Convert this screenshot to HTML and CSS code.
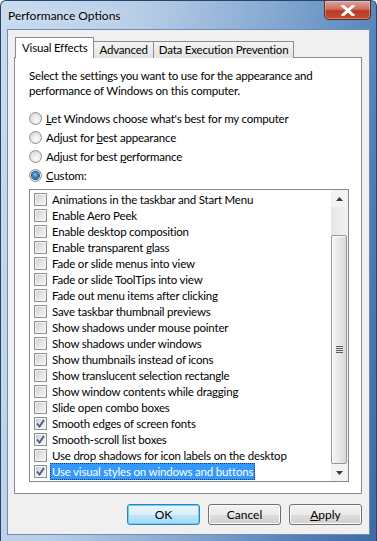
FILE: index.html
```html
<!DOCTYPE html>
<html lang="en">

<head>
    <meta charset="UTF-8">
    <meta name="viewport" content="width=device-width, initial-scale=1.0">
    <title>Performance Options</title>
    <link rel="stylesheet" href="styles.css">
</head>

<body>
    <div class="window">
        <div class="titlebar">
            <span class="title">Performance Options</span>
            <div class="close-button">
                <svg width="14" height="11" viewBox="0 0 14 11">
                    <path d="M2 1 L12 10 M12 1 L2 10" stroke="#fff" stroke-width="3" stroke-linecap="square" />
                </svg>
            </div>
        </div>

        <div class="client">
            <div class="tabs">
                <div class="tab active">Visual Effects</div>
                <div class="tab">Advanced</div>
                <div class="tab">Data Execution Prevention</div>
            </div>

            <div class="panel">
                <p class="intro">Select the settings you want to use for the appearance and<br>performance of Windows on this computer.</p>

                <div class="radios">
                    <div class="radio-row"><span class="radio"></span><span><u>L</u>et Windows choose what's best for my computer</span></div>
                    <div class="radio-row"><span class="radio"></span><span>Adjust for <u>b</u>est appearance</span></div>
                    <div class="radio-row"><span class="radio"></span><span>Adjust for best <u>p</u>erformance</span></div>
                    <div class="radio-row"><span class="radio checked"></span><span><u>C</u>ustom:</span></div>
                </div>

                <div class="listbox">
                    <ul class="items" id="items"></ul>
                    <div class="scrollbar">
                        <div class="arrow">
                            <svg width="7" height="4" viewBox="0 0 7 4"><path d="M0 4 L3.5 0 L7 4 Z" fill="#3c3c3c" /></svg>
                        </div>
                        <div class="track">
                            <div class="thumb">
                                <span class="grip"></span>
                            </div>
                        </div>
                        <div class="arrow">
                            <svg width="7" height="4" viewBox="0 0 7 4"><path d="M0 0 L7 0 L3.5 4 Z" fill="#3c3c3c" /></svg>
                        </div>
                    </div>
                </div>
            </div>

            <div class="buttons">
                <button class="btn default">OK</button>
                <button class="btn">Cancel</button>
                <button class="btn"><u>A</u>pply</button>
            </div>
        </div>
    </div>

    <script>
        // Visual effect settings: [label, checked]
        const effects = [
            ['Animations in the taskbar and Start Menu', false],
            ['Enable Aero Peek', false],
            ['Enable desktop composition', false],
            ['Enable transparent glass', false],
            ['Fade or slide menus into view', false],
            ['Fade or slide ToolTips into view', false],
            ['Fade out menu items after clicking', false],
            ['Save taskbar thumbnail previews', false],
            ['Show shadows under mouse pointer', false],
            ['Show shadows under windows', false],
            ['Show thumbnails instead of icons', false],
            ['Show translucent selection rectangle', false],
            ['Show window contents while dragging', false],
            ['Slide open combo boxes', false],
            ['Smooth edges of screen fonts', true],
            ['Smooth-scroll list boxes', true],
            ['Use drop shadows for icon labels on the desktop', false],
            ['Use visual styles on windows and buttons', true]
        ];

        const list = document.getElementById('items');
        effects.forEach((effect, i) => {
            const li = document.createElement('li');
            li.className = 'item';

            const box = document.createElement('span');
            box.className = 'checkbox';
            if (effect[1]) {
                box.innerHTML = '<svg width="9" height="9" viewBox="0 0 9 9"><path d="M1 4.5 L3.5 7.5 L8 1" fill="none" stroke="#4a5a8c" stroke-width="1.8" /></svg>';
            }

            const label = document.createElement('span');
            label.className = 'label';
            if (i === effects.length - 1) {
                label.classList.add('selected');
            }
            label.textContent = effect[0];

            li.appendChild(box);
            li.appendChild(label);
            list.appendChild(li);
        });
    </script>
</body>

</html>
```

FILE: styles.css
```css
body {
    margin: 0;
    padding: 0;
    font-family: Lato, "Liberation Sans", sans-serif;
    font-size: 11.5px;
    letter-spacing: -0.2px;
    color: #000;
}

.window {
    width: 377px;
    height: 541px;
    box-sizing: border-box;
    display: flex;
    flex-direction: column;
    padding: 0 6px 6px 6px;
    border: 1px solid #24466e;
    border-bottom: none;
    border-radius: 6px 6px 0 0;
    background: linear-gradient(100deg, #c9dbee 0%, #b8cee7 30%, #86a9d2 58%, #4f7fb5 85%, #3c6ca4 100%);
}

.titlebar {
    height: 28px;
    display: flex;
    align-items: flex-start;
    justify-content: space-between;
}

.title {
    margin: 7px 0 0 1px;
    font-size: 12px;
    letter-spacing: 0;
    line-height: 16px;
    text-shadow: 0 0 6px #e8f0f8;
}

.close-button {
    width: 47px;
    height: 19px;
    margin-right: -1px;
    display: flex;
    align-items: center;
    justify-content: center;
    box-sizing: border-box;
    border: 1px solid #5a2a2a;
    border-top: none;
    border-radius: 0 0 5px 5px;
    background: linear-gradient(#e0a197 0%, #cf6e5e 45%, #b83a22 55%, #c24c34 100%);
    box-shadow: inset 0 0 0 1px rgba(255, 255, 255, 0.3);
}

.client {
    flex: 1;
    display: flex;
    flex-direction: column;
    padding: 7px 7px 9px 6px;
    border: 1px solid #6f8db3;
    background: #f0f0f0;
}

/* tabs */

.tabs {
    display: flex;
    align-items: flex-end;
    height: 21px;
    margin-bottom: -1px;
    padding-left: 1px;
    position: relative;
    z-index: 1;
}

.tab {
    height: 17px;
    box-sizing: border-box;
    padding: 0 5px;
    line-height: 16px;
    border: 1px solid #898c95;
    border-bottom: none;
    margin-left: -1px;
    background: linear-gradient(#f4f4f4, #e3e3e3);
}

.tab.active {
    height: 21px;
    padding: 2px 6px 0;
    margin-left: 0;
    background: #fff;
}

.tab.active + .tab {
    margin-left: 0;
    border-left: none;
}

.panel {
    height: 437px;
    box-sizing: border-box;
    padding: 10px 12px 0 14px;
    border: 1px solid #898c95;
    background: #fff;
}

.intro {
    margin: 0;
    line-height: 15px;
    white-space: nowrap;
}

/* radio buttons */

.radios {
    margin-top: 11px;
}

.radio-row {
    height: 19px;
    display: flex;
    align-items: center;
}

.radio {
    width: 13px;
    height: 13px;
    box-sizing: border-box;
    margin-right: 4px;
    border-radius: 50%;
    border: 1px solid #8e8f8f;
    background: radial-gradient(circle at 60% 65%, #fbfbfb 0%, #e4e4e4 55%, #cfcfcf 100%);
    display: flex;
    align-items: center;
    justify-content: center;
}

.radio.checked::after {
    content: "";
    width: 7px;
    height: 7px;
    border-radius: 50%;
    background: radial-gradient(circle at 45% 40%, #8ed0f5 0%, #2a7fc8 45%, #164b86 100%);
    box-shadow: 0 0 0 1px #2a4d7a;
}

/* list box */

.listbox {
    margin-top: 4px;
    height: 293px;
    box-sizing: border-box;
    display: flex;
    border: 1px solid #828790;
}

.items {
    flex: 1;
    margin: 0;
    padding: 1px 0 0 4px;
    list-style: none;
}

.item {
    height: 16px;
    display: flex;
    align-items: center;
}

.checkbox {
    width: 13px;
    height: 13px;
    box-sizing: border-box;
    margin-right: 3px;
    border: 1px solid #8e8f8f;
    background: linear-gradient(135deg, #cdcdcd 0%, #e8e8e8 60%, #f6f6f6 100%);
    box-shadow: inset 0 0 0 1px #f3f3f3;
    display: flex;
    align-items: center;
    justify-content: center;
}

.label {
    padding: 0 1px;
    line-height: 15px;
    border: 1px dotted transparent;
}

.label.selected {
    background: #3399ff;
    color: #fff;
    border-color: #1a3a66;
}

/* scrollbar */

.scrollbar {
    width: 17px;
    display: flex;
    flex-direction: column;
    background: #f0f0f0;
}

.arrow {
    height: 17px;
    display: flex;
    align-items: center;
    justify-content: center;
    background: #f3f3f3;
}

.track {
    flex: 1;
    display: flex;
    flex-direction: column;
    justify-content: flex-end;
    background: linear-gradient(to right, #e6e6e6, #f2f2f2);
}

.thumb {
    height: 229px;
    margin: 0 1px 0 0;
    box-sizing: border-box;
    border: 1px solid #979797;
    border-radius: 2px;
    background: linear-gradient(to right, #f4f4f4 0%, #e8e8e8 50%, #d8d8d8 100%);
    box-shadow: inset 1px 1px 0 #fff;
    display: flex;
    align-items: center;
    justify-content: center;
}

.grip {
    width: 7px;
    height: 7px;
    background: repeating-linear-gradient(#5c5c5c 0, #5c5c5c 1px, #e8e8e8 1px, #e8e8e8 2px);
}

/* dialog buttons */

.buttons {
    margin-top: 10px;
    display: flex;
    justify-content: flex-end;
    gap: 8px;
}

.btn {
    width: 73px;
    height: 21px;
    padding: 0;
    font-family: inherit;
    font-size: 12px;
    color: #000;
    border: 1px solid #707070;
    border-radius: 3px;
    background: linear-gradient(#f2f2f2 0%, #ebebeb 50%, #dddddd 51%, #cfcfcf 100%);
    box-shadow: inset 0 0 0 1px #fcfcfc;
}

.btn.default {
    border-color: #3c7fb1;
    background: linear-gradient(#eaf6fd 0%, #d9f0fc 50%, #bee6fd 51%, #a7d9f5 100%);
    box-shadow: inset 0 0 0 1px #5fd3ff;
}
```
